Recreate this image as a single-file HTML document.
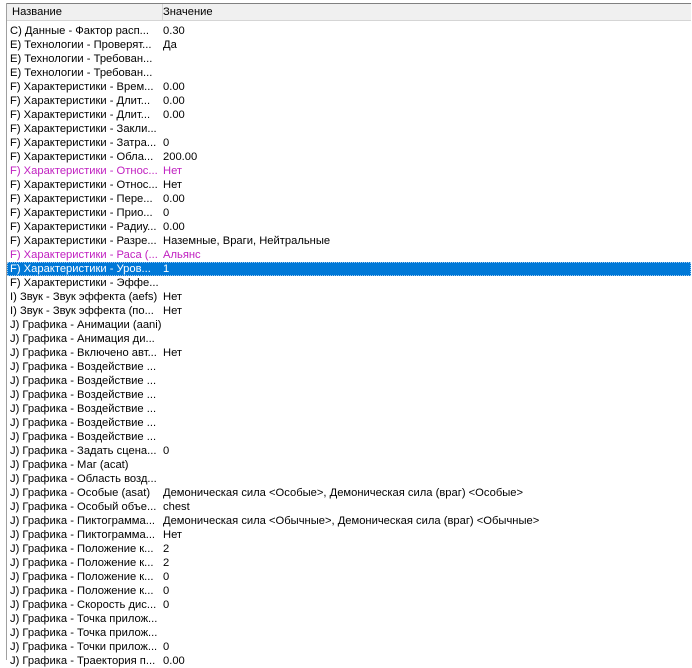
<!DOCTYPE html>
<html><head><meta charset="utf-8"><style>
body{margin:0;width:692px;height:660px;overflow:hidden;background:#fff;font-family:"Liberation Sans",sans-serif;font-size:11.2px;position:relative}
.lb{position:absolute;left:6px;top:3px;width:1px;height:657px;background:#a0a0a0}
.hd{position:absolute;left:7px;top:3px;width:684px;height:16px;background:#f0f0f0;border-top:1px solid #808080;border-bottom:1px solid #d5d5d5}
.hd span{position:absolute;top:2px;color:#000}
.sep{position:absolute;left:155px;top:0;width:1px;height:16px;background:#d5d5d5}
.r{position:absolute;left:7px;margin-top:1px;width:684px;height:14px;line-height:14px;white-space:nowrap}
.r .a{position:absolute;left:3px}
.r .b{position:absolute;left:156px}
.p{color:#c020c0}
.s{background:#0078d7;color:#fff;outline:1px dotted #9cc8f0;outline-offset:-1px}
</style></head><body>
<div class="lb"></div>
<div class="hd"><span style="left:5px">Название</span><div class="sep"></div><span style="left:156px">Значение</span></div>
<div class="r" style="top:23px"><span class="a">C) Данные - Фактор расп...</span><span class="b">0.30</span></div>
<div class="r" style="top:37px"><span class="a">E) Технологии - Проверят...</span><span class="b">Да</span></div>
<div class="r" style="top:51px"><span class="a">E) Технологии - Требован...</span></div>
<div class="r" style="top:65px"><span class="a">E) Технологии - Требован...</span></div>
<div class="r" style="top:79px"><span class="a">F) Характеристики - Врем...</span><span class="b">0.00</span></div>
<div class="r" style="top:93px"><span class="a">F) Характеристики - Длит...</span><span class="b">0.00</span></div>
<div class="r" style="top:107px"><span class="a">F) Характеристики - Длит...</span><span class="b">0.00</span></div>
<div class="r" style="top:121px"><span class="a">F) Характеристики - Закли...</span></div>
<div class="r" style="top:135px"><span class="a">F) Характеристики - Затра...</span><span class="b">0</span></div>
<div class="r" style="top:149px"><span class="a">F) Характеристики - Обла...</span><span class="b">200.00</span></div>
<div class="r p" style="top:163px"><span class="a">F) Характеристики - Относ...</span><span class="b">Нет</span></div>
<div class="r" style="top:177px"><span class="a">F) Характеристики - Относ...</span><span class="b">Нет</span></div>
<div class="r" style="top:191px"><span class="a">F) Характеристики - Пере...</span><span class="b">0.00</span></div>
<div class="r" style="top:205px"><span class="a">F) Характеристики - Прио...</span><span class="b">0</span></div>
<div class="r" style="top:219px"><span class="a">F) Характеристики - Радиу...</span><span class="b">0.00</span></div>
<div class="r" style="top:233px"><span class="a">F) Характеристики - Разре...</span><span class="b">Наземные, Враги, Нейтральные</span></div>
<div class="r p" style="top:247px"><span class="a">F) Характеристики - Раса (...</span><span class="b">Альянс</span></div>
<div class="r s" style="top:261px"><span class="a">F) Характеристики - Уров...</span><span class="b">1</span></div>
<div class="r" style="top:275px"><span class="a">F) Характеристики - Эффе...</span></div>
<div class="r" style="top:289px"><span class="a">I) Звук - Звук эффекта (aefs)</span><span class="b">Нет</span></div>
<div class="r" style="top:303px"><span class="a">I) Звук - Звук эффекта (по...</span><span class="b">Нет</span></div>
<div class="r" style="top:317px"><span class="a">J) Графика - Анимации (aani)</span></div>
<div class="r" style="top:331px"><span class="a">J) Графика - Анимация ди...</span></div>
<div class="r" style="top:345px"><span class="a">J) Графика - Включено авт...</span><span class="b">Нет</span></div>
<div class="r" style="top:359px"><span class="a">J) Графика - Воздействие ...</span></div>
<div class="r" style="top:373px"><span class="a">J) Графика - Воздействие ...</span></div>
<div class="r" style="top:387px"><span class="a">J) Графика - Воздействие ...</span></div>
<div class="r" style="top:401px"><span class="a">J) Графика - Воздействие ...</span></div>
<div class="r" style="top:415px"><span class="a">J) Графика - Воздействие ...</span></div>
<div class="r" style="top:429px"><span class="a">J) Графика - Воздействие ...</span></div>
<div class="r" style="top:443px"><span class="a">J) Графика - Задать сцена...</span><span class="b">0</span></div>
<div class="r" style="top:457px"><span class="a">J) Графика - Маг (acat)</span></div>
<div class="r" style="top:471px"><span class="a">J) Графика - Область возд...</span></div>
<div class="r" style="top:485px"><span class="a">J) Графика - Особые (asat)</span><span class="b">Демоническая сила &lt;Особые&gt;, Демоническая сила (враг) &lt;Особые&gt;</span></div>
<div class="r" style="top:499px"><span class="a">J) Графика - Особый объе...</span><span class="b">chest</span></div>
<div class="r" style="top:513px"><span class="a">J) Графика - Пиктограмма...</span><span class="b">Демоническая сила &lt;Обычные&gt;, Демоническая сила (враг) &lt;Обычные&gt;</span></div>
<div class="r" style="top:527px"><span class="a">J) Графика - Пиктограмма...</span><span class="b">Нет</span></div>
<div class="r" style="top:541px"><span class="a">J) Графика - Положение к...</span><span class="b">2</span></div>
<div class="r" style="top:555px"><span class="a">J) Графика - Положение к...</span><span class="b">2</span></div>
<div class="r" style="top:569px"><span class="a">J) Графика - Положение к...</span><span class="b">0</span></div>
<div class="r" style="top:583px"><span class="a">J) Графика - Положение к...</span><span class="b">0</span></div>
<div class="r" style="top:597px"><span class="a">J) Графика - Скорость дис...</span><span class="b">0</span></div>
<div class="r" style="top:611px"><span class="a">J) Графика - Точка прилож...</span></div>
<div class="r" style="top:625px"><span class="a">J) Графика - Точка прилож...</span></div>
<div class="r" style="top:639px"><span class="a">J) Графика - Точки прилож...</span><span class="b">0</span></div>
<div class="r" style="top:653px"><span class="a">J) Графика - Траектория п...</span><span class="b">0.00</span></div>
</body></html>
